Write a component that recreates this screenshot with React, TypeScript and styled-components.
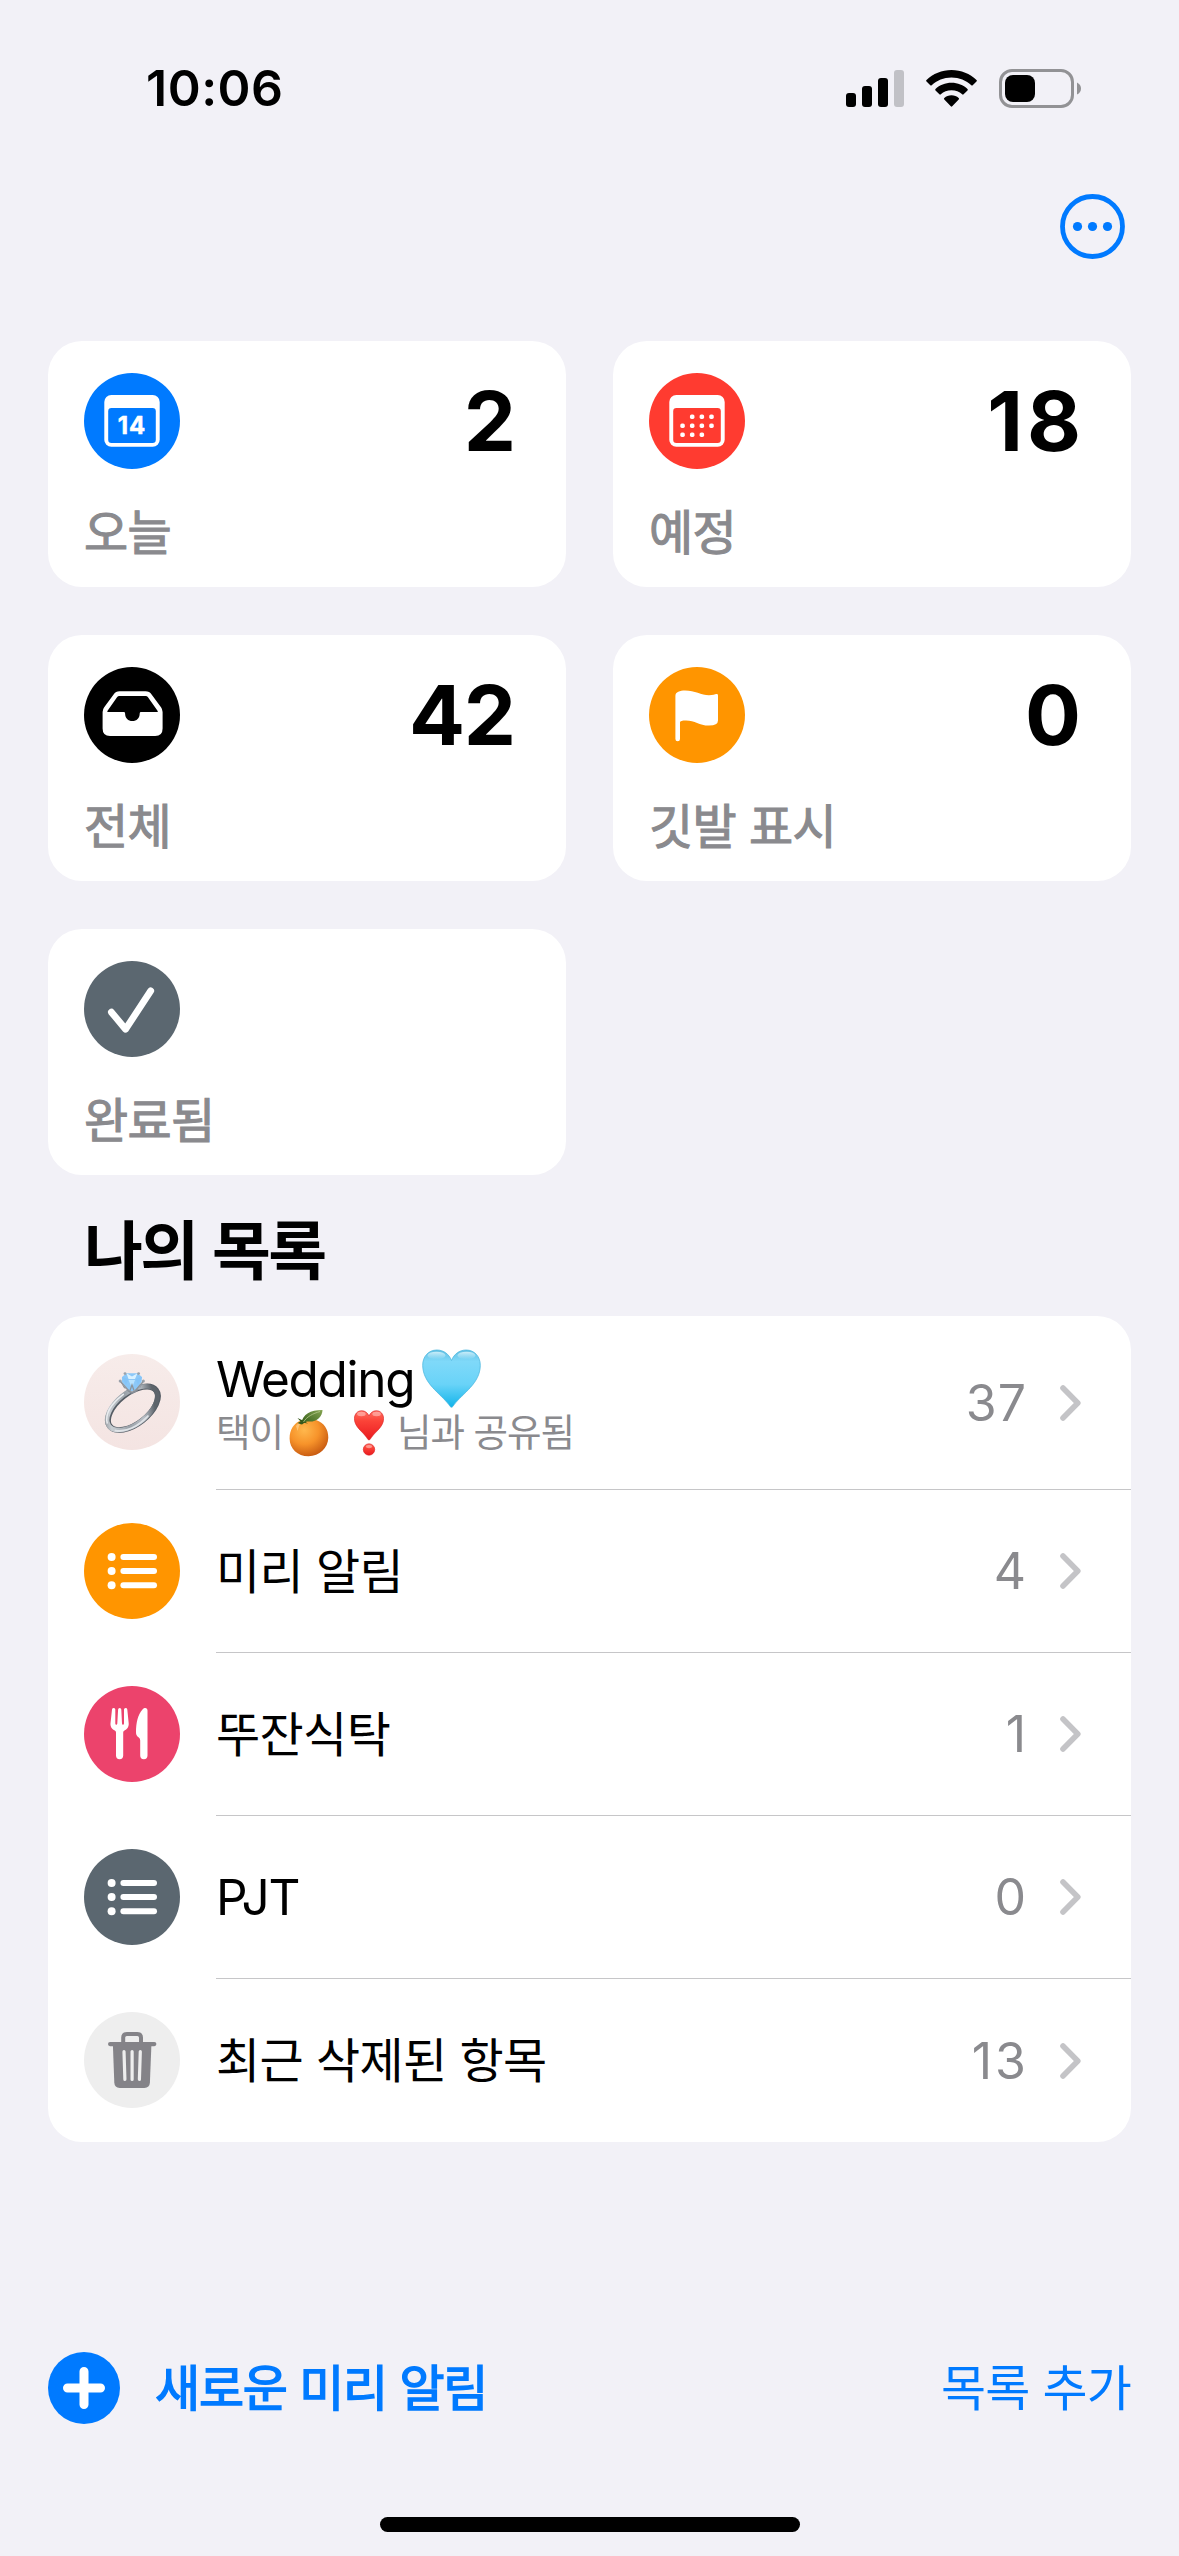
import React from "react";
import styled, { createGlobalStyle } from "styled-components";

const latin = `Inter, "Noto Sans CJK KR", sans-serif`;
const korean = `"Noto Sans CJK KR", Inter, sans-serif`;

const GlobalStyle = createGlobalStyle`
  html, body { margin: 0; padding: 0; background: #f2f1f7; }
  * { box-sizing: border-box; }
  svg { display: block; flex: none; }
`;

const Screen = styled.main`
  width: 1179px;
  height: 2556px;
  display: flex;
  flex-direction: column;
  background: #f2f1f7;
  color: #000;
  font-family: ${korean};
  overflow: hidden;
`;

const StatusBar = styled.header`
  height: 176px;
  flex: none;
  padding: 0 98px 0 146px;
  display: flex;
  align-items: center;
  justify-content: space-between;
`;

const Clock = styled.span`
  font: 600 50px/60px ${latin};
  letter-spacing: 0.5px;
`;

const StatusIcons = styled.div`
  display: flex;
  align-items: center;
  gap: 22px;
`;

const Toolbar = styled.nav`
  height: 165px;
  flex: none;
  padding: 18px 54px 0 0;
  display: flex;
  justify-content: flex-end;
  align-items: flex-start;
`;

const PlainButton = styled.button`
  border: 0;
  padding: 0;
  background: none;
  color: #007aff;
  display: flex;
  align-items: center;
`;

const CardGrid = styled.section`
  flex: none;
  padding: 0 48px;
  display: grid;
  grid-template-columns: 518px 518px;
  grid-auto-rows: 246px;
  gap: 48px 47px;
`;

const Card = styled.article`
  padding: 32px 50px 0 36px;
  border-radius: 34px;
  background: #fff;
`;

const CardTop = styled.div`
  height: 96px;
  display: flex;
  justify-content: space-between;
  align-items: center;
`;

const CardCount = styled.strong<{ $tracking: number }>`
  font: 700 83px/96px ${latin};
  letter-spacing: ${(p) => p.$tracking}px;
  margin-right: ${(p) => -p.$tracking}px;
`;

const CardLabel = styled.div`
  margin-top: 30px;
  font-size: 48px;
  line-height: 60px;
  font-weight: 400;
  letter-spacing: -0.6px;
  color: #8a8a8e;
  -webkit-text-stroke: 1.1px #8a8a8e;
`;

const SectionTitle = styled.h2`
  flex: none;
  margin: 0;
  height: 141px;
  padding: 0 0 0 84px;
  font-size: 64px;
  line-height: 143px;
  font-weight: 700;
  letter-spacing: -2.6px;
`;

const ListCard = styled.section`
  flex: none;
  margin: 0 48px;
  padding-left: 36px;
  border-radius: 34px;
  background: #fff;
  overflow: hidden;
`;

const Row = styled.div<{ $height: number }>`
  height: ${(p) => p.$height}px;
  display: flex;
  align-items: stretch;
  gap: 36px;
`;

const RowBadge = styled.div`
  padding-bottom: 2px;
  display: flex;
  align-items: center;
`;

const RowBody = styled.div<{ $line: boolean }>`
  flex: 1;
  padding-right: 50px;
  display: flex;
  align-items: center;
  border-bottom: ${(p) => (p.$line ? "1px solid #c6c6c8" : "0")};
`;

const RowText = styled.div`
  flex: 1;
  display: flex;
  flex-direction: column;
`;

const RowName = styled.div<{ $korean: boolean }>`
  display: flex;
  align-items: center;
  gap: 8px;
  height: 60px;
  padding-bottom: ${(p) => (p.$korean ? 7 : 0)}px;
  font-size: 48px;
  line-height: 60px;
  letter-spacing: -0.6px;
`;

const LatinName = styled.span`
  font: 400 49.5px/56px ${latin};
  letter-spacing: -1.3px;
`;

const RowNote = styled.div`
  display: flex;
  align-items: center;
  height: 48px;
  font-size: 37.5px;
  line-height: 42px;
  color: #8a8a8e;
  letter-spacing: -1px;
`;

const NoteText = styled.span`
  padding-bottom: 6px;
`;

const NoteEmoji = styled.span<{ $left: number; $right: number }>`
  margin: 0 ${(p) => p.$right}px 0 ${(p) => p.$left}px;
`;

const RowCount = styled.span<{ $tracking: number }>`
  margin-right: ${(p) => 34 - p.$tracking}px;
  font: 400 50px/60px ${latin};
  letter-spacing: ${(p) => p.$tracking}px;
  color: #8a8a8e;
`;

const Footer = styled.footer`
  flex: none;
  margin-top: 210px;
  height: 72px;
  padding: 0 48px;
  display: flex;
  align-items: center;
  justify-content: space-between;
`;

const FooterText = styled.span<{ $bold?: boolean }>`
  font-family: ${korean};
  font-size: 49px;
  line-height: 65px;
  height: 72px;
  font-weight: 400;
  margin-left: ${(p) => (p.$bold ? 35 : 0)}px;
  letter-spacing: ${(p) => (p.$bold ? -1.2 : -0.8)}px;
  -webkit-text-stroke: ${(p) => (p.$bold ? "1.5px #007aff" : "0")};
`;

const HomeIndicator = styled.div`
  flex: none;
  width: 420px;
  height: 15px;
  margin: 93px auto 0;
  border-radius: 8px;
  background: #000;
`;

function Disc({ fill, children }: { fill: string; children: React.ReactNode }) {
  return (
    <svg width="96" height="96" viewBox="0 0 96 96">
      <circle cx="48" cy="48" r="48" fill={fill} />
      {children}
    </svg>
  );
}

function CalendarFrame({ fill }: { fill: string }) {
  return (
    <>
      <rect x="20.3" y="22" width="55.4" height="51.8" rx="7" fill="#fff" />
      <rect x="24.2" y="35" width="47.6" height="35" rx="3.2" fill={fill} />
    </>
  );
}

const TodayIcon = () => (
  <Disc fill="#007aff">
    <CalendarFrame fill="#007aff" />
    <text
      x="48" y="61.4" textAnchor="middle" fontFamily="Inter, sans-serif" fontSize="24" fontWeight="700"
      letterSpacing="0.9" fill="#fff" stroke="#fff" strokeWidth="0.5" strokeLinejoin="round"
    >
      14
    </text>
  </Disc>
);

const dots = [[1, 0], [2, 0], [3, 0], [0, 1], [1, 1], [2, 1], [3, 1], [0, 2], [1, 2], [2, 2]];

const ScheduledIcon = () => (
  <Disc fill="#ff3b30">
    <CalendarFrame fill="#ff3b30" />
    {dots.map(([c, r]) => (
      <rect key={`${c}-${r}`} x={31.3 + c * 9.65} y={41.4 + r * 9} width="4.5" height="4.5" rx="1.6" fill="#fff" />
    ))}
  </Disc>
);

const AllIcon = () => (
  <Disc fill="#000">
    <path
      fill="#fff"
      d="M35.5 24.3H61.5Q65.5 24.3 67.6 27.4L77 40.2Q78.6 42.3 78.6 45V61.5Q78.6 69 71.2 69H26Q18.6 69 18.6 61.5V45Q18.6 42.3 20.2 40.2L29.6 27.4Q31.7 24.3 35.5 24.3Z"
    />
    <path
      fill="#000"
      d="M35.2 28.9H61.8Q63 28.9 63.8 30L73.7 44Q74.3 45 73.2 45H57Q55.7 45 55.7 46.4C55.7 51 52.6 54 48.4 54C44.2 54 41.1 51 41.1 46.4Q41.1 45 39.8 45H23.9Q22.8 45 23.4 44L33.2 30Q34 28.9 35.2 28.9Z"
    />
  </Disc>
);

const FlagIcon = () => (
  <Disc fill="#ff9500">
    <path
      fill="#fff"
      d="M26.4 29C26.4 25 31 23.6 36 23.6C46 23.6 52 28.3 60 28.3C64 28.3 66 27.4 67.3 27.1Q69 26.8 69 28.5V53.5Q69 58.6 60 58.6C50 58.6 46 53.5 37 53.5C33 53.5 31 54.2 31 55.2V72A2.3 2.3 0 0 1 26.4 72Z"
    />
  </Disc>
);

const DoneIcon = () => (
  <Disc fill="#5b6770">
    <path d="M27.4 51.2L41.6 68.2L66.7 29.9" fill="none" stroke="#fff" strokeWidth="6.8" strokeLinecap="round" strokeLinejoin="round" />
  </Disc>
);

const ListIcon = ({ fill }: { fill: string }) => (
  <Disc fill={fill}>
    {[34, 48.1, 62.2].map((y) => (
      <g key={y} fill="#fff">
        <circle cx="27.6" cy={y} r="4" />
        <rect x="36.4" y={y - 3} width="36.6" height="6" rx="3" />
      </g>
    ))}
  </Disc>
);

const DiningIcon = () => (
  <Disc fill="#ec436c">
    <path
      fill="#fff"
      d="M28 23.4Q28.2 22 29.8 22Q31.3 22 31.3 23.6V37.6Q31.4 38.8 32.3 38.8Q33.2 38.8 33.3 37.6L34.1 23.6Q34.2 22 35.7 22Q37.2 22 37.3 23.6L38 37.6Q38.1 38.8 39 38.8Q39.9 38.8 40 37.6V23.6Q40 22 41.6 22Q43.1 22 43.3 23.4L44.7 37.3C45 41.2 42.8 43.4 40.5 44.6Q39.2 45.3 39.2 46.6V69.6A3.6 3.6 0 0 1 32 69.6V46.6Q32 45.3 30.8 44.6C28.4 43.4 26.1 41.2 26.5 37.3Z"
    />
    <path
      fill="#fff"
      d="M63.5 24.5V69.6A3.6 3.6 0 0 1 56.2 69.6V54.4Q56.2 52.6 54.8 51.6C52.8 50.2 52 48.7 52 46.2C52 36.5 54 28 58.5 23.4C61 20.9 63.5 22 63.5 24.5Z"
    />
  </Disc>
);

const TrashIcon = () => (
  <Disc fill="#eeeeee">
    <path d="M39.2 31V25.6Q39.2 22 42.8 22H53.4Q57 22 57 25.6V31" fill="none" stroke="#848388" strokeWidth="4" />
    <rect x="24" y="30" width="48.4" height="4.2" rx="2.1" fill="#848388" />
    <path fill="#848388" d="M28.9 33H67.4L65.9 70.6Q65.6 76 60.4 76H35.7Q30.6 76 30.3 70.6Z" />
    <g stroke="#eeeeee" strokeWidth="3.2" strokeLinecap="round">
      <path d="M40 39.6L40.9 67.4M48.1 39.6V67.4M56.3 39.6L55.4 67.4" />
    </g>
  </Disc>
);

const RingIcon = () => (
  <svg width="96" height="96" viewBox="0 0 96 96" role="img" aria-label="💍">
    <defs>
      <linearGradient id="ringDisc" x1="0" y1="0" x2="0" y2="1">
        <stop offset="0" stopColor="#f7ecea" />
        <stop offset="1" stopColor="#f4e4e2" />
      </linearGradient>
      <linearGradient id="ringBand" x1="0" y1="0" x2="1" y2="0.3">
        <stop offset="0" stopColor="#7d8388" />
        <stop offset="0.18" stopColor="#c9ced3" />
        <stop offset="0.5" stopColor="#9aa1a8" />
        <stop offset="0.78" stopColor="#b9bfc6" />
        <stop offset="1" stopColor="#5d646b" />
      </linearGradient>
    </defs>
    <circle cx="48" cy="48" r="48" fill="url(#ringDisc)" />
    <g transform="rotate(-38 49 54.3)" fill="none">
      <ellipse cx="49" cy="54.3" rx="29.3" ry="15.4" stroke="#555c64" strokeWidth="5.8" />
      <ellipse cx="48.4" cy="53.7" rx="29.3" ry="15.8" stroke="url(#ringBand)" strokeWidth="4.6" />
      <path d="M19.6 50C24 40.500 36 37.300 50 37.400" stroke="#e9ecef" strokeWidth="1.5" strokeLinecap="round" />
      <path d="M21.500 61C28 69 42 71.800 56 69.600" stroke="#dfe3e7" strokeWidth="1.8" strokeLinecap="round" />
    </g>
    <path d="M36 27L44 37.5L48 40L53 37.5L60 27L56 34L48 38L40 34Z" fill="#868d95" />
    <path d="M38 23L42.5 19.3H53.5L58 23L57.6 28L52 35.5L48 37L44 35.5L37.8 28Z" fill="#8cc8f8" />
    <path d="M42.5 19.3L48 22.5L53.5 19.3L51 25H44.5Z" fill="#d9f1ff" />
    <path d="M38 23L44.5 25L42 31ZM58 23L51.5 25L54 31Z" fill="#84c4f8" />
    <path d="M44.5 26L51 26L48 34Z" fill="#b9e3ff" />
    <g fill="#9aa2ab">
      <circle cx="41" cy="19.6" r="1.4" />
      <circle cx="54.6" cy="19.6" r="1.4" />
      <circle cx="36.2" cy="27" r="1.5" />
      <circle cx="59.4" cy="27" r="1.5" />
    </g>
    <path d="M36.5 27.5L45 37M59.2 27.5L51 37M46 36.5L48 31L50 36.5" fill="none" stroke="#8d949c" strokeWidth="1.3" />
  </svg>
);

const BlueHeart = () => (
  <svg width="59" height="59" viewBox="0 0 59 59" role="img" aria-label="🩵">
    <defs>
      <linearGradient id="heartFill" x1="0" y1="0" x2="0" y2="1">
        <stop offset="0" stopColor="#62bfe2" />
        <stop offset="0.2" stopColor="#7fd9f9" />
        <stop offset="0.6" stopColor="#69d3f8" />
        <stop offset="1" stopColor="#12b4ea" />
      </linearGradient>
      <linearGradient id="heartShine" x1="0" y1="0" x2="0" y2="1">
        <stop offset="0" stopColor="#e2f8ff" />
        <stop offset="1" stopColor="#e2f8ff" stopOpacity="0" />
      </linearGradient>
    </defs>
    <path
      d="M29.5 58.3C28.5 58.3 27.8 57 27 55.8C18 44 1 34.500 0.700 16.500C0.600 7.500 6.500 1 14.800 1C21.500 1 27 5 29.500 11.500C32 5 37.500 1 44.200 1C52.500 1 58.400 7.500 58.300 16.500C58 34.500 41 44 32 55.800C31.200 57 30.500 58.300 29.500 58.300Z"
      fill="url(#heartFill)" stroke="#4fb9df" strokeWidth="0.8"
    />
    <ellipse cx="14.500" cy="6.500" rx="9" ry="3.800" fill="url(#heartShine)" opacity="0.8" />
    <ellipse cx="44.500" cy="6.500" rx="9" ry="3.800" fill="url(#heartShine)" opacity="0.8" />
  </svg>
);

const Orange = () => (
  <svg width="40" height="48" viewBox="0 0 40 48" role="img" aria-label="🍊">
    <defs>
      <radialGradient id="orangeFill" cx="0.38" cy="0.3" r="0.75">
        <stop offset="0" stopColor="#ffb84d" />
        <stop offset="0.5" stopColor="#f7932a" />
        <stop offset="1" stopColor="#c4560f" />
      </radialGradient>
      <linearGradient id="leafFill" x1="0" y1="1" x2="1" y2="0">
        <stop offset="0" stopColor="#2f5a16" />
        <stop offset="1" stopColor="#86a552" />
      </linearGradient>
    </defs>
    <path d="M12 11.500C16 9.500 22 9.300 27 11C35 13.500 39.500 20.500 39.300 28.800C39 39 30.500 47.300 19.500 47.300C8.500 47.300 0.600 39.500 0.600 29.500C0.600 20.500 5 14 12 11.500Z" fill="url(#orangeFill)" />
    <path d="M7 17Q9.500 13.500 12 13.200Q9.500 17 8.600 22Z" fill="#ffd08a" opacity="0.7" />
    <path d="M12.500 13.500C14 5.500 21 1 33.500 1C33.500 8 27 13.500 19 12.500Q15.500 12 13.500 15.500Z" fill="url(#leafFill)" />
    <path d="M8.500 9L11.500 12.500L8.500 14L12.500 15.500L14.500 13.800L19 14.500L14 11.500Z" fill="#36591b" />
    <path d="M14.500 13C18 7.500 24 4.500 31 2.500" fill="none" stroke="#b7c98d" strokeWidth="0.8" />
  </svg>
);

const HeartExclamation = () => (
  <svg width="30" height="46" viewBox="0 0 30 46" role="img" aria-label="❣️">
    <defs>
      <linearGradient id="redFill" x1="0" y1="0" x2="0" y2="1">
        <stop offset="0" stopColor="#ff6f62" />
        <stop offset="0.35" stopColor="#fb4338" />
        <stop offset="1" stopColor="#ea1a20" />
      </linearGradient>
    </defs>
    <path
      d="M15 30C14 30 13.400 28.500 12.500 27.300C8.500 21.500 0.500 17 0.400 8.800C0.400 4 3.500 0.700 7.600 0.700C11 0.700 13.700 2.700 15 6C16.300 2.700 19 0.700 22.400 0.700C26.500 0.700 29.600 4 29.600 8.800C29.500 17 21.500 21.500 17.500 27.300C16.600 28.500 16 30 15 30Z"
      fill="url(#redFill)" stroke="#d91d1f" strokeWidth="0.6"
    />
    <ellipse cx="7.400" cy="4" rx="4.300" ry="2.200" fill="#ffc4be" opacity="0.6" />
    <ellipse cx="22.600" cy="4" rx="4.300" ry="2.200" fill="#ffc4be" opacity="0.6" />
    <circle cx="15" cy="39.500" r="5.700" fill="url(#redFill)" stroke="#d91d1f" strokeWidth="0.6" />
    <ellipse cx="15" cy="36.600" rx="3" ry="1.600" fill="#ffc4be" opacity="0.6" />
  </svg>
);

const SignalIcon = () => (
  <svg width="58" height="37" viewBox="0 0 58 37">
    <rect x="0" y="23" width="10" height="14" rx="3" />
    <rect x="16" y="16" width="10" height="21" rx="3" />
    <rect x="32" y="8" width="10" height="29" rx="3" />
    <rect x="48" y="0" width="10" height="37" rx="3" fill="#c1c1c6" />
  </svg>
);

const WifiIcon = () => (
  <svg width="51" height="37" viewBox="0 0 51 37">
    <path d="M25.500 0C35.200 0 44 3.800 50.500 10Q51.200 10.700 50.500 11.400L46.700 15.200Q46 15.900 45.300 15.200C40.200 10.400 33.200 7.500 25.500 7.500C17.800 7.500 10.800 10.400 5.700 15.200Q5 15.900 4.300 15.200L0.500 11.400Q-0.200 10.700 0.500 10C7 3.800 15.800 0 25.500 0Z" />
    <path d="M25.500 12.800C31.800 12.800 37.300 15.100 41.500 19Q42.200 19.700 41.500 20.400L37.600 24.300Q36.900 25 36.200 24.300C33.400 21.800 29.700 20.300 25.500 20.300C21.300 20.300 17.600 21.800 14.800 24.300Q14.100 25 13.400 24.300L9.500 20.400Q8.800 19.700 9.500 19C13.700 15.100 19.200 12.800 25.500 12.800Z" />
    <path d="M25.500 25.300C28.300 25.300 30.800 26.300 32.700 28Q33.500 28.700 32.700 29.500L26.200 36.300Q25.500 37 24.800 36.300L18.300 29.500Q17.500 28.700 18.300 28C20.200 26.300 22.700 25.300 25.500 25.300Z" />
  </svg>
);

const BatteryIcon = () => (
  <svg width="82" height="39" viewBox="0 0 82 39">
    <rect x="1.500" y="1.500" width="72" height="36" rx="11.500" fill="none" stroke="#929295" strokeWidth="3" />
    <rect x="6" y="6" width="30" height="27" rx="8" />
    <path d="M78 13.500Q82 15.500 82 19.500Q82 23.500 78 25.500Z" fill="#929295" />
  </svg>
);

const MoreIcon = () => (
  <svg width="65" height="65" viewBox="0 0 65 65">
    <circle cx="32.500" cy="32.500" r="30" fill="none" stroke="#007aff" strokeWidth="4.800" />
    <circle cx="17.500" cy="32.500" r="4.600" fill="#007aff" />
    <circle cx="32.500" cy="32.500" r="4.600" fill="#007aff" />
    <circle cx="47.500" cy="32.500" r="4.600" fill="#007aff" />
  </svg>
);

const PlusIcon = () => (
  <svg width="72" height="72" viewBox="0 0 72 72">
    <circle cx="36" cy="36" r="36" fill="#007aff" />
    <path d="M36 19.500V52.500M19.500 36H52.500" stroke="#fff" strokeWidth="9" strokeLinecap="round" />
  </svg>
);

const Chevron = () => (
  <svg width="21" height="36" viewBox="0 0 21 36">
    <path d="M3 3L17.800 18L3 33" fill="none" stroke="#c4c4c7" strokeWidth="5.600" strokeLinecap="round" strokeLinejoin="round" />
  </svg>
);

const cards = [
  { label: "오늘", count: "2", tracking: 0, icon: <TodayIcon /> },
  { label: "예정", count: "18", tracking: 4, icon: <ScheduledIcon /> },
  { label: "전체", count: "42", tracking: -1.5, icon: <AllIcon /> },
  { label: "깃발 표시", count: "0", tracking: 0, icon: <FlagIcon /> },
  { label: "완료됨", count: "", tracking: 0, icon: <DoneIcon /> },
];

const rows = [
  {
    id: "wedding",
    korean: false,
    name: (
      <>
        <LatinName>Wedding</LatinName>
        <BlueHeart />
      </>
    ),
    note: (
      <>
        <NoteText>택이</NoteText>
        <NoteEmoji $left={6} $right={25}><Orange /></NoteEmoji>
        <NoteEmoji $left={0} $right={13}><HeartExclamation /></NoteEmoji>
        <NoteText>님과 공유됨</NoteText>
      </>
    ),
    count: "37",
    tracking: 1,
    icon: <RingIcon />,
    height: 174,
  },
  { id: "reminders", korean: true, name: "미리 알림", count: "4", tracking: 0, icon: <ListIcon fill="#ff9500" />, height: 163 },
  { id: "dining", korean: true, name: "뚜잔식탁", count: "1", tracking: 0, icon: <DiningIcon />, height: 163 },
  { id: "pjt", korean: false, name: <LatinName>PJT</LatinName>, count: "0", tracking: 0, icon: <ListIcon fill="#5b6770" />, height: 163 },
  { id: "trash", korean: true, name: "최근 삭제된 항목", count: "13", tracking: 3, icon: <TrashIcon />, height: 163 },
];

export default function App() {
  return (
    <Screen lang="ko">
      <GlobalStyle />
      <StatusBar>
        <Clock>10:06</Clock>
        <StatusIcons>
          <SignalIcon />
          <WifiIcon />
          <BatteryIcon />
        </StatusIcons>
      </StatusBar>
      <Toolbar>
        <PlainButton><MoreIcon /></PlainButton>
      </Toolbar>
      <CardGrid>
        {cards.map((c) => (
          <Card key={c.label}>
            <CardTop>
              {c.icon}
              <CardCount $tracking={c.tracking}>{c.count}</CardCount>
            </CardTop>
            <CardLabel>{c.label}</CardLabel>
          </Card>
        ))}
      </CardGrid>
      <SectionTitle>나의 목록</SectionTitle>
      <ListCard>
        {rows.map((r, i) => (
          <Row key={r.id} $height={r.height}>
            <RowBadge>{r.icon}</RowBadge>
            <RowBody $line={i < rows.length - 1}>
              <RowText>
                <RowName $korean={r.korean}>{r.name}</RowName>
                {r.note && <RowNote>{r.note}</RowNote>}
              </RowText>
              <RowCount $tracking={r.tracking}>{r.count}</RowCount>
              <Chevron />
            </RowBody>
          </Row>
        ))}
      </ListCard>
      <Footer>
        <PlainButton>
          <PlusIcon />
          <FooterText $bold>새로운 미리 알림</FooterText>
        </PlainButton>
        <PlainButton><FooterText>목록 추가</FooterText></PlainButton>
      </Footer>
      <HomeIndicator />
    </Screen>
  );
}
